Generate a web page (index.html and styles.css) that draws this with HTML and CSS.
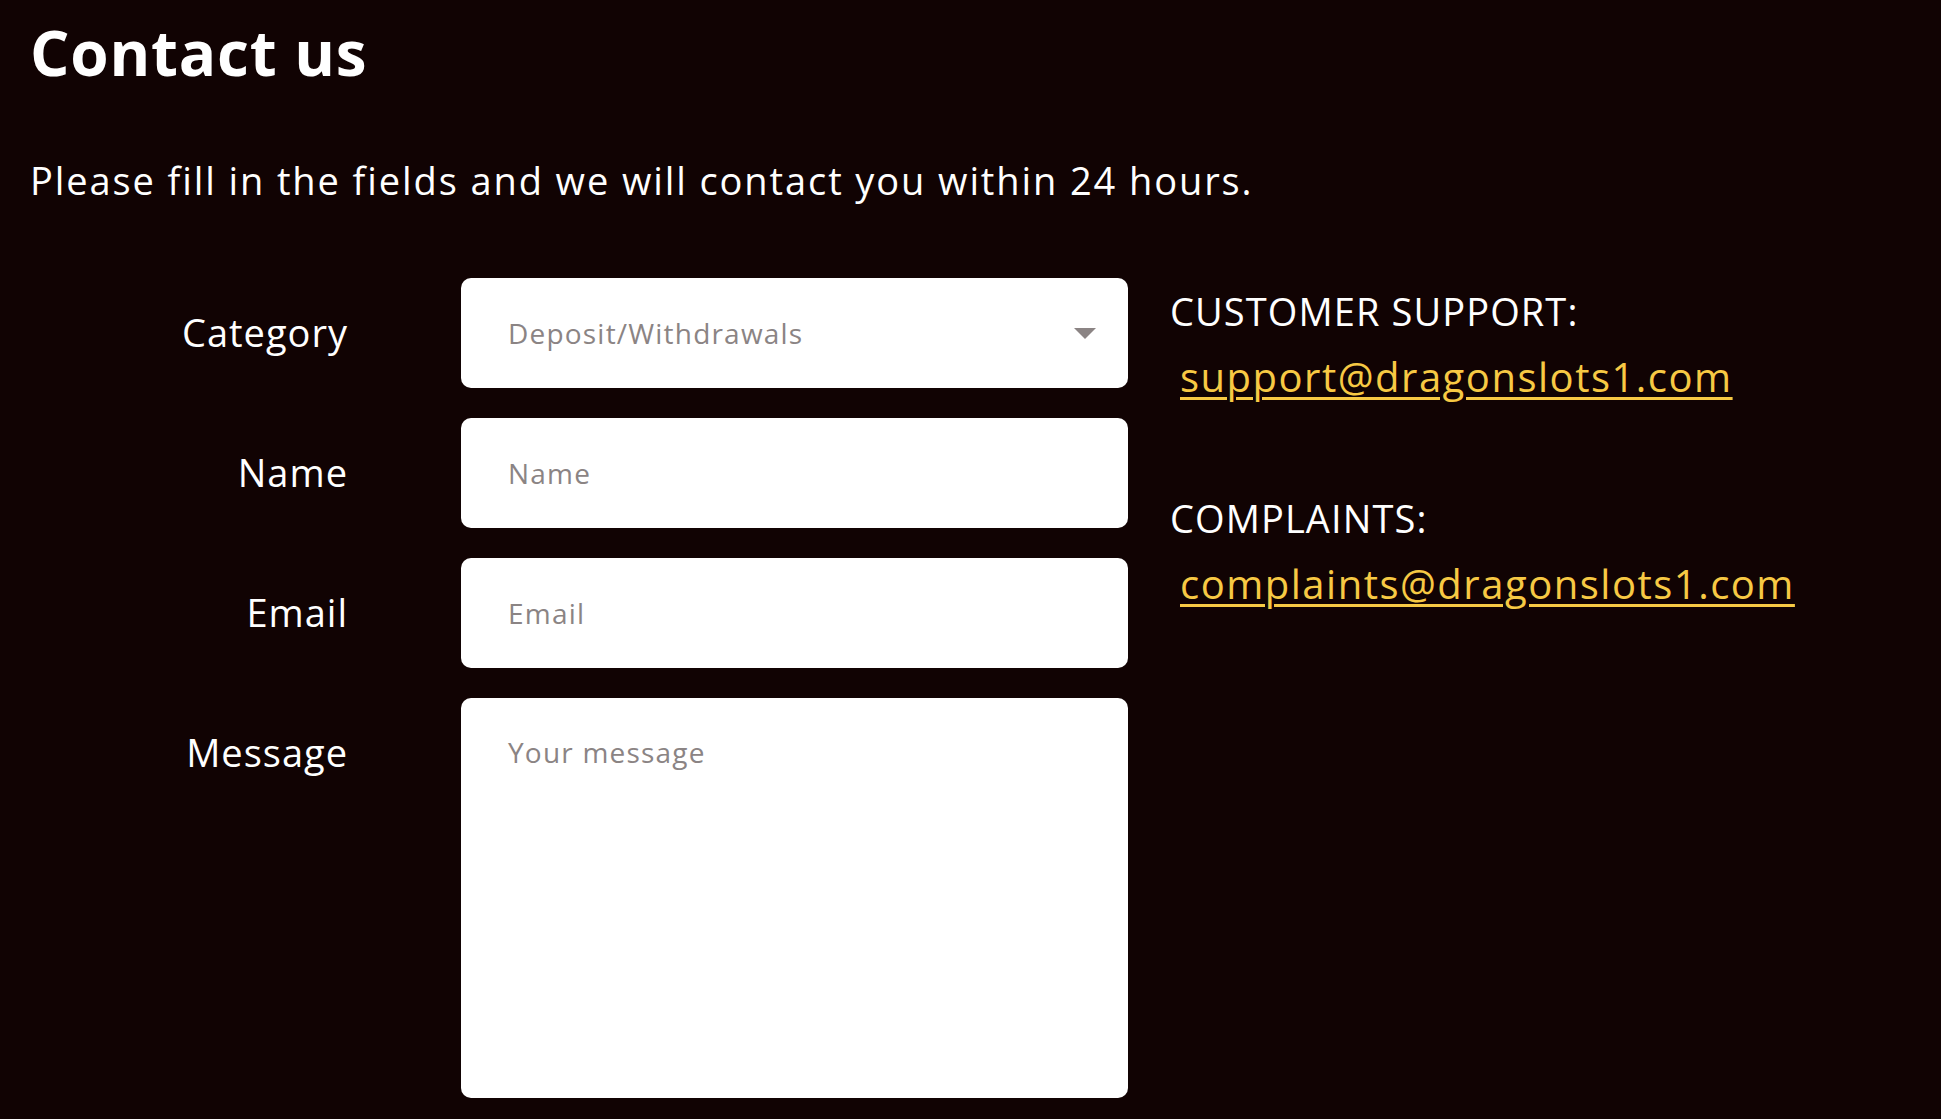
FILE: index.html
```html
<!DOCTYPE html>
<html lang="en">
<head>
    <meta charset="UTF-8">
    <meta name="viewport" content="width=device-width, initial-scale=1.0">
    <title>Contact us</title>
    <link rel="stylesheet" href="styles.css">
</head>
<body>
    <main class="contact">
        <h1 class="contact-title">Contact us</h1>
        <p class="contact-intro">Please fill in the fields and we will contact you within 24 hours.</p>

        <div class="contact-body">
            <form class="contact-form">
                <label class="field-label" for="category">Category</label>
                <div class="select-wrap">
                    <select id="category" class="field">
                        <option>Deposit/Withdrawals</option>
                        <option>Account</option>
                        <option>Bonuses</option>
                        <option>Other</option>
                    </select>
                    <svg class="select-arrow" width="22" height="11" viewBox="0 0 22 11">
                        <path d="M0 0 L22 0 L11 11 Z" fill="#8b8484"/>
                    </svg>
                </div>

                <label class="field-label" for="name">Name</label>
                <input id="name" class="field" type="text" placeholder="Name">

                <label class="field-label" for="email">Email</label>
                <input id="email" class="field" type="email" placeholder="Email">

                <label class="field-label" for="message">Message</label>
                <textarea id="message" class="field field-message" placeholder="Your message"></textarea>
            </form>

            <aside class="contact-info">
                <div class="info-block">
                    <h4>CUSTOMER SUPPORT:</h4>
                    <a href="mailto:support@dragonslots1.com">support@dragonslots1.com</a>
                </div>
                <div class="info-block">
                    <h4>COMPLAINTS:</h4>
                    <a href="mailto:complaints@dragonslots1.com">complaints@dragonslots1.com</a>
                </div>
            </aside>
        </div>
    </main>
</body>
</html>
```

FILE: styles.css
```css
body {
    margin: 0;
    background-color: #110303;
    color: #fff;
    font-family: "Open Sans", Arial, sans-serif;
}
.contact {
    padding: 0 30px;
}
.contact-title {
    margin: 0;
    padding-top: 14px;
    font-size: 62px;
    font-weight: 700;
    line-height: 76px;
    letter-spacing: 0.8px;
}
.contact-intro {
    margin: 0;
    padding-top: 62px;
    font-size: 38px;
    font-weight: 400;
    line-height: 56px;
    letter-spacing: 1.9px;
}
.contact-body {
    display: flex;
    margin-top: 70px;
    gap: 42px;
}
.contact-form {
    display: grid;
    grid-template-columns: 318px 667px;
    column-gap: 113px;
    row-gap: 30px;
}
.field-label {
    text-align: right;
    font-size: 38px;
    line-height: 108px;
    letter-spacing: 1px;
}
.field {
    box-sizing: border-box;
    width: 100%;
    height: 110px;
    margin: 0;
    padding: 0 47px;
    border: none;
    border-radius: 10px;
    background: #fff;
    color: #8b8484;
    font-family: "Open Sans", Arial, sans-serif;
    font-size: 28px;
    font-weight: 500;
    letter-spacing: 1.2px;
    outline: none;
}
.field::placeholder {
    color: #8b8484;
}
.select-wrap {
    position: relative;
}
select.field {
    appearance: none;
    -webkit-appearance: none;
    cursor: pointer;
}
.select-arrow {
    position: absolute;
    top: 50px;
    right: 32px;
    pointer-events: none;
}
.field-message {
    height: 400px;
    padding-top: 34px;
    resize: none;
    line-height: 40px;
}
.contact-info {
    padding-top: 10px;
}
.info-block {
    margin-bottom: 95px;
}
.info-block h4 {
    margin: 0;
    font-size: 38px;
    font-weight: 400;
    line-height: 46px;
    letter-spacing: 1.1px;
}
.info-block a {
    display: inline-block;
    margin-top: 20px;
    margin-left: 10px;
    font-size: 40px;
    line-height: 46px;
    letter-spacing: 1.5px;
    color: #f7c944;
    text-decoration: underline;
    text-underline-offset: 5px;
    text-decoration-thickness: 3px;
}
```
